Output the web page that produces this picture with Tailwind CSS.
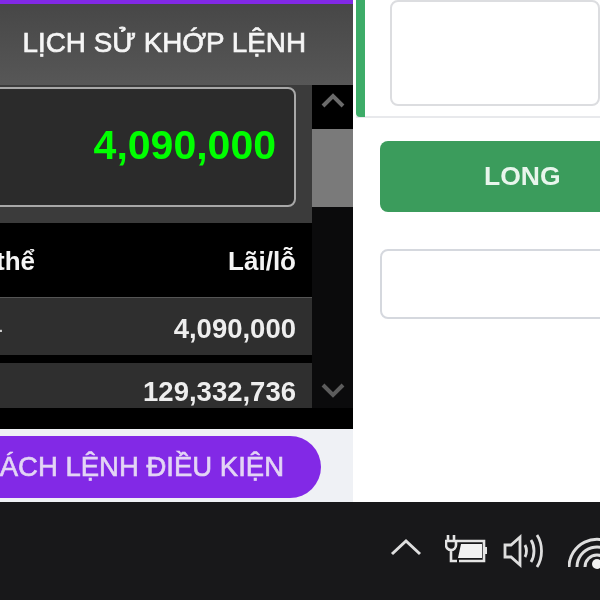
<!DOCTYPE html>
<html lang="en">
<head>
  <meta charset="UTF-8">
  <meta name="viewport" content="width=device-width, initial-scale=1.0">
  <title>Giao dịch</title>
  <script src="https://cdn.jsdelivr.net/npm/@tailwindcss/browser@4"></script>
</head>
<body class="bg-white">
  <div class="w-[600px] h-[600px] overflow-hidden flex flex-col font-['Liberation_Sans',sans-serif] blur-[0.6px]">
    <!-- App area -->
    <div class="h-[502px] flex shrink-0 bg-white">
      <!-- Left panel -->
      <div class="w-[353px] shrink-0 flex flex-col">
        <div class="h-[4px] bg-[#8229e6]"></div>
        <div class="h-[81px] bg-gradient-to-b from-[#474747] to-[#575757] flex items-center justify-end pr-[47px] pb-[4px]">
          <span class="text-[27.8px] leading-none text-[#f5f5f5] whitespace-nowrap [-webkit-text-stroke:0.7px_#f5f5f5]">LỊCH SỬ KHỚP LỆNH</span>
        </div>
        <div class="h-[344px] bg-black flex">
          <!-- Scrolling content -->
          <div class="w-[312px] shrink-0 flex flex-col overflow-hidden">
            <div class="h-[138px] shrink-0 bg-[#3b3b3b] pt-[2px]">
              <div class="ml-[-20px] w-[316px] h-[120px] bg-[#2b2b2b] border-2 border-[#a8a8a8] rounded-lg flex items-center justify-end pr-[18px] pb-[3px]">
                <span class="text-[41px] leading-none font-bold text-[#00ff00]">4,090,000</span>
              </div>
            </div>
            <div class="h-[74px] shrink-0 flex items-center justify-between pr-[16px] text-[26px] font-bold text-[#f5f5f5]">
              <span class="ml-[-4px] mt-[2px]">thể</span>
              <span class="mt-[2px]">Lãi/lỗ</span>
            </div>
            <div class="h-[58px] shrink-0 bg-[#2f2f2f] border-t border-[#555] flex items-center justify-between pr-[16px] text-[27.5px] font-bold text-[#eeeeee]">
              <span class="ml-[-6px] mt-[4px] text-[#cfcfcf] font-normal">-</span>
              <span class="mt-[4px]">4,090,000</span>
            </div>
            <div class="h-[8px] shrink-0"></div>
            <div class="h-[45px] shrink-0 bg-[#2f2f2f] flex items-start justify-end pt-[14px] pr-[16px] text-[27.5px] leading-[30px] font-bold text-[#eeeeee] overflow-hidden">
              <span>129,332,736</span>
            </div>
          </div>
          <!-- Scrollbar -->
          <div class="w-[41px] shrink-0 flex flex-col h-[323px] bg-[#0b0b0c]">
            <div class="h-[44px] bg-black flex items-start justify-center pt-[7px]">
              <svg width="24" height="16" viewBox="0 0 24 16" fill="none" stroke="#6a6a6a" stroke-width="4"><path d="M2 14 L12 4 L22 14"/></svg>
            </div>
            <div class="h-[78px] bg-[#7a7a7a]"></div>
            <div class="flex-1 flex items-end justify-center pb-[9px]">
              <svg width="24" height="16" viewBox="0 0 24 16" fill="none" stroke="#5c5c5c" stroke-width="4"><path d="M2 2 L12 12 L22 2"/></svg>
            </div>
          </div>
        </div>
        <!-- Bottom bar -->
        <div class="flex-1 bg-[#eff1f5] pt-[7px]">
          <div class="w-[321px] h-[62px] bg-[#8229e6] rounded-r-[31px] flex items-center justify-end pr-[37px] overflow-hidden">
            <span class="text-[27.5px] leading-none text-[#e3d5f5] whitespace-nowrap [-webkit-text-stroke:0.6px_#e3d5f5]">DANH SÁCH LỆNH ĐIỀU KIỆN</span>
          </div>
        </div>
      </div>

      <!-- Right panel -->
      <div class="flex-1 flex flex-col pl-[3px] min-w-0">
        <div class="h-[118px] flex border-b-2 border-[#e8e9ec] shrink-0">
          <div class="w-[9px] h-[117px] bg-[#3dac68] rounded-bl-sm shrink-0"></div>
          <div class="ml-[25px] w-[300px] h-[106px] border-2 border-[#dcdde0] rounded-lg"></div>
        </div>
        <div class="pl-[24px] pt-[23px] flex flex-col gap-[37px]">
          <div class="w-[300px] h-[71px] bg-[#3b9c5c] rounded-lg flex items-center pl-[104px]">
            <span class="text-[26.5px] leading-none font-bold text-[#e8f5ec]">LONG</span>
          </div>
          <div class="w-[300px] h-[70px] border-2 border-[#d5d8de] rounded-lg bg-white"></div>
        </div>
      </div>
    </div>

    <!-- Taskbar -->
    <div class="flex-1 bg-[#18181a] flex items-start pl-[390px] overflow-hidden">
      <svg width="32" height="20" viewBox="0 0 32 20" fill="none" stroke="#dedede" stroke-width="3" class="shrink-0 mt-[35px]"><path d="M2 17 L16 4 L30 17"/></svg>
      <svg width="42" height="30" viewBox="0 0 42 30" fill="none" stroke="#e4e4e4" stroke-width="2.6" class="shrink-0 ml-[23px] mt-[32px]">
        <path d="M3 1v6M9 1v6M1 7h10v4a5 5 0 0 1-10 0zM6 16v11h6"/>
        <path d="M12 7h27v20H14"/>
        <path d="M16 10h21v14H13z" fill="#f2f2f2" stroke="none"/>
        <path d="M41 13v7"/>
      </svg>
      <svg width="42" height="36" viewBox="0 0 42 36" fill="none" stroke="#dedede" stroke-width="2.8" class="shrink-0 ml-[16px] mt-[31px]">
        <path d="M2 12h6l9-8v28l-9-8H2z"/>
        <path d="M22 12c2 4 2 8 0 12M28 7c4 6 4 16 0 22M34 2c6 9 6 23 0 32"/>
      </svg>
      <svg width="46" height="36" viewBox="0 0 46 36" fill="none" stroke="#dedede" stroke-width="3" class="shrink-0 ml-[23px] mt-[32px]">
        <path d="M1 33A28 28 0 0 1 46 11M9 33A20 20 0 0 1 46 22.5M17 33A12 12 0 0 1 41 33"/>
        <circle cx="29" cy="30" r="5" fill="#f2f2f2" stroke="none"/>
      </svg>
    </div>
  </div>
</body>
</html>
